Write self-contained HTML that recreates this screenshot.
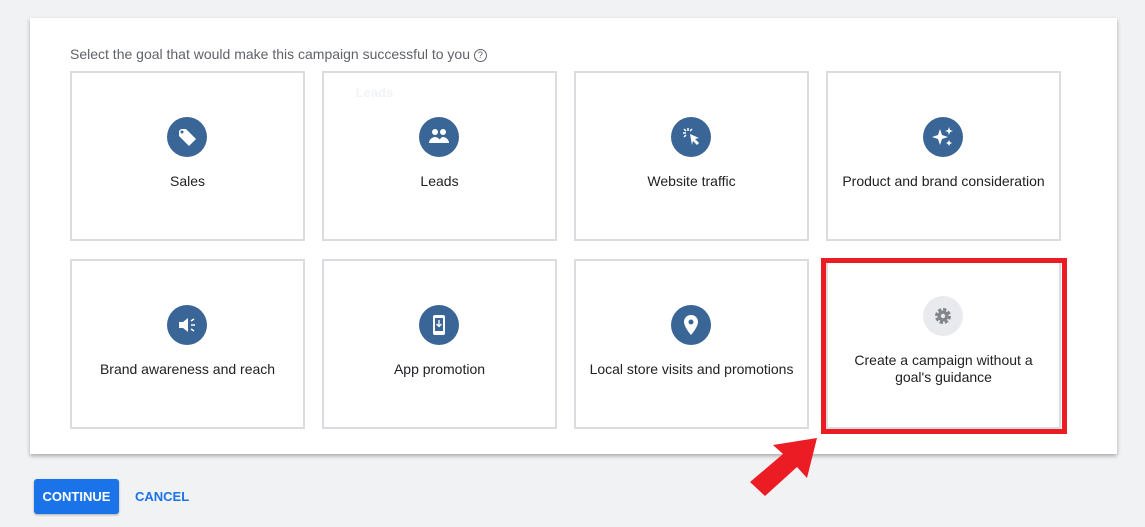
<!DOCTYPE html>
<html><head><style>
body{margin:0;width:1145px;height:527px;background:#f1f2f4;font-family:"Liberation Sans",sans-serif;position:relative;overflow:hidden}
.panel{position:absolute;left:30px;top:18px;width:1087px;height:436px;background:#fff;box-shadow:0 2px 4px rgba(0,0,0,.3)}
.hd{position:absolute;left:70px;top:46px;font-size:14px;color:#5f6368}
.c{position:absolute;box-sizing:border-box;width:235px;height:170px;border:2px solid #dadce0;background:#fff;text-align:center;font-size:14px;color:#202124}
.ic{position:absolute;left:95px;width:40px;height:40px;border-radius:50%;background:#3a6597;top:44px}
.t{position:absolute;left:0;right:0;top:100px}
.btn{position:absolute;left:34px;top:479px;width:85px;height:35px;background:#1a73e8;border-radius:3px;color:#fff;font-weight:bold;font-size:13px;line-height:35px;text-align:center;box-shadow:0 1px 2px rgba(0,0,0,.3)}
.cancel{position:absolute;left:135px;top:479px;line-height:35px;font-size:13px;color:#1a73e8;font-weight:bold}
</style></head><body>
<div class="panel"></div>
<div class="hd">Select the goal that would make this campaign successful to you <span style="display:inline-block;width:11px;height:11px;border:1px solid #5f6368;border-radius:50%;font-size:9px;line-height:11px;text-align:center;vertical-align:1px">?</span></div>

<div class="c" style="left:70px;top:71px"><div class="ic"><svg width="40" height="40" viewBox="0 0 40 40"><path d="M12 14v5l10 10 7-7-10-10h-5z" fill="#fff"/><circle cx="15" cy="15" r="1.5" fill="#3a6597"/></svg></div><div class="t">Sales</div></div>
<div class="c" style="left:322px;top:71px"><div style="position:absolute;left:10px;top:12px;color:#f1f3f8;font-weight:bold;font-size:13px">&nbsp;&nbsp;&nbsp;&nbsp;&nbsp;&nbsp;Leads</div><div class="ic"><svg width="40" height="40" viewBox="0 0 40 40"><circle cx="16" cy="15" r="3" fill="#fff"/><circle cx="24" cy="15" r="3" fill="#fff"/><path d="M10 26c0-4 4-6 6-6s6 2 6 6zM20 26c0-3 2-6 4-6s6 2 6 6z" fill="#fff"/></svg></div><div class="t">Leads</div></div>
<div class="c" style="left:574px;top:71px"><div class="ic"><svg width="40" height="40" viewBox="0 0 40 40"><path d="M19 17l9 4-4 1 4 4-2 2-4-4-1 4z" fill="#fff"/><path d="M17 11v3M12 16h3M13 12l2 2M21 12l-2 2M13 20l2-2" stroke="#fff" stroke-width="1.5"/></svg></div><div class="t">Website traffic</div></div>
<div class="c" style="left:826px;top:71px"><div class="ic"><svg width="40" height="40" viewBox="0 0 40 40"><path d="M17 12l2 6 6 2-6 2-2 6-2-6-6-2 6-2z M26 10l1 3 3 1-3 1-1 3-1-3-3-1 3-1z M26 23l1 2 2 1-2 1-1 2-1-2-2-1 2-1z" fill="#fff"/></svg></div><div class="t">Product and brand consideration</div></div>

<div class="c" style="left:70px;top:259px"><div class="ic"><svg width="40" height="40" viewBox="0 0 40 40"><path d="M12 17h4l5-4v14l-5-4h-4z" fill="#fff"/><path d="M24 16l3-2M24 20h4M24 24l3 2" stroke="#fff" stroke-width="1.5"/></svg></div><div class="t">Brand awareness and reach</div></div>
<div class="c" style="left:322px;top:259px"><div class="ic"><svg width="40" height="40" viewBox="0 0 40 40"><rect x="14" y="10" width="12" height="20" rx="2" fill="#fff"/><rect x="16" y="13" width="8" height="13" fill="#3a6597"/><path d="M20 15v6M17.5 19l2.5 2.5 2.5-2.5" stroke="#fff" stroke-width="1.3" fill="none"/></svg></div><div class="t">App promotion</div></div>
<div class="c" style="left:574px;top:259px"><div class="ic"><svg width="40" height="40" viewBox="0 0 40 40"><path d="M20 10c-4 0-7 3-7 7 0 5 7 13 7 13s7-8 7-13c0-4-3-7-7-7z" fill="#fff"/><circle cx="20" cy="17" r="2.5" fill="#3a6597"/></svg></div><div class="t">Local store visits and promotions</div></div>
<div class="c" style="left:826px;top:259px"><div class="ic" style="background:#e8eaed;top:35px"><svg width="40" height="40" viewBox="0 0 40 40"><circle cx="20" cy="20" r="6" fill="none" stroke="#80868b" stroke-width="4" stroke-dasharray="3 1.7"/><circle cx="20" cy="20" r="5.5" fill="#80868b"/><circle cx="20" cy="20" r="2.2" fill="#e8eaed"/></svg></div><div class="t" style="top:91px;line-height:17px">Create a campaign without a<br>goal's guidance</div></div>

<div style="position:absolute;left:821px;top:258px;width:236px;height:166px;border:5px solid #ec1c24"></div>
<svg style="position:absolute;left:740px;top:430px" width="90" height="70" viewBox="0 0 90 70"><path d="M77 8L67 48 57 37 25 66 10 52 43 24 33 15z" fill="#ec1c24"/></svg>

<div class="btn">CONTINUE</div>
<div class="cancel">CANCEL</div>
</body></html>
